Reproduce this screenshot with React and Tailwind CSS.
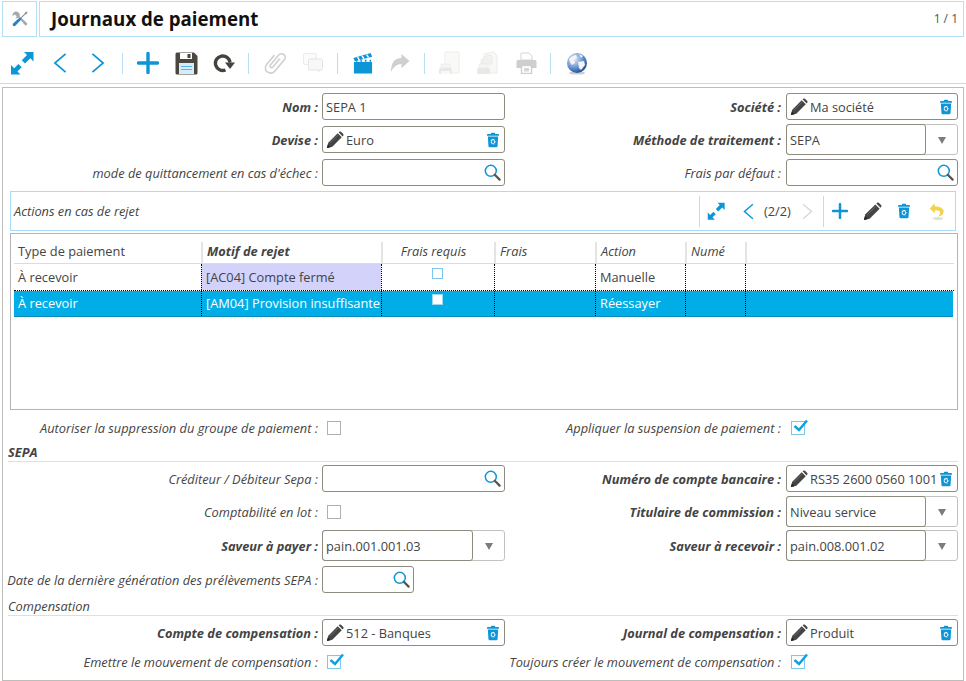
const Pencil = ({ s = 18, c = "#444" }) => (
  <svg width={s} height={s} viewBox="0 0 20 20" className="shrink-0">
    <path d="M1 19 L2.5 13 L13 2.5 L17.5 7 L7 17.5 Z" fill={c} />
    <path d="M14 1.5 L15.3 0.6 Q16 0.3 16.6 0.8 L19.2 3.4 Q19.7 4 19.3 4.7 L18.5 6 Z" fill={c} />
    <path d="M1 19 L2 15 L5 18 Z" fill="#222" />
    <path d="M4.5 13.5 L13.5 4.5" stroke="#777" strokeWidth="0.8" />
  </svg>
);
const Trash = () => (
  <svg width="12" height="16" viewBox="0 0 14 18" className="shrink-0">
    <path d="M4.5 1.5 Q4.5 0.5 5.5 0.5 H8.5 Q9.5 0.5 9.5 1.5 V2 H13 Q14 2 14 3 V4 H0 V3 Q0 2 1 2 H4.5 Z" fill="#0e95d6" />
    <path d="M1 5 H13 L12.3 16 Q12.2 17.5 10.8 17.5 H3.2 Q1.8 17.5 1.7 16 Z" fill="#0e95d6" />
    <path d="M7 8 L9.4 10 L8.4 13.4 L5.6 13.4 L4.6 10 Z" fill="none" stroke="#fff" strokeWidth="1.4" strokeDasharray="2.4 0.9" />
  </svg>
);
const Magnifier = () => (
  <svg width="17" height="17" viewBox="0 0 17 17" className="shrink-0">
    <circle cx="6.8" cy="6.8" r="5.5" fill="#fff" stroke="#0e95d6" strokeWidth="1.5" />
    <path d="M10.8 10.8 L15.6 15.6" stroke="#55554e" strokeWidth="2.2" strokeLinecap="round" />
  </svg>
);
const Expand = ({ s = 24 }) => (
  <svg width={s} height={s} viewBox="0 0 24 24" className="block">
    <path d="M14 1 H23.5 V10.5 L20.3 7.3 L15 12.5 L11.8 9.3 L17 4 Z" fill="#0e95d6" />
    <path d="M10.5 23.5 H1 V14 L4.2 17.2 L8.5 13 L11.7 16.2 L7.4 20.4 Z" fill="#0e95d6" />
  </svg>
);
const Chev = ({ dir = "l", c = "#0e95d6", w = 14, h = 22, sw = 1.8 }) => (
  <svg width={w} height={h} viewBox="0 0 15 22" fill="none" className="block">
    <path d={dir === "l" ? "M13.5 1.2 L2 11 L13.5 20.8" : "M1.5 1.2 L13 11 L1.5 20.8"} stroke={c} strokeWidth={sw} />
  </svg>
);
const Plus = ({ s = 22 }) => (
  <svg width={s} height={s} viewBox="0 0 22 22" className="block"><path d="M11 1.5 V20.5 M1.5 11 H20.5" stroke="#0e95d6" strokeWidth="3.4" strokeLinecap="round" /></svg>
);
const Save = () => (
  <svg width="23" height="23" viewBox="0 0 23 23" className="block">
    <path d="M0.5 2 Q0.5 0.5 2 0.5 H19 L22.5 4 V21 Q22.5 22.5 21 22.5 H2 Q0.5 22.5 0.5 21 Z" fill="#4a4740" />
    <rect x="5" y="1" width="12" height="6" fill="#fff" />
    <rect x="12.5" y="2" width="3" height="4" fill="#4a4740" />
    <rect x="4" y="11" width="15" height="11" fill="#d6ecfa" />
    <path d="M6 14.5 H17 M6 17.5 H17" stroke="#5cb3e6" strokeWidth="1" />
  </svg>
);
const Refresh = () => (
  <svg width="22" height="19" viewBox="0 0 22 19" fill="none" className="block">
    <path d="M17 8.5 A7.3 7.3 0 1 0 12.5 16" stroke="#45433d" strokeWidth="3.4" />
    <path d="M12 8.5 H22 L17 15 Z" fill="#45433d" />
  </svg>
);
const Clip = () => (
  <svg width="24" height="26" viewBox="0 -1 24 26" fill="none" className="block">
    <g transform="rotate(40 12 12)">
      <path d="M6.5 7 V18.5 a5.3 5.3 0 0 0 10.6 0 V3.5 a3.7 3.7 0 0 0 -7.4 0 V16.5 a1.6 1.6 0 0 0 3.2 0 V6" stroke="#d0d0ce" strokeWidth="1.6" strokeLinecap="round" />
    </g>
  </svg>
);
const Comments = () => (
  <svg width="20" height="20" viewBox="0 0 20 20" className="block">
    <rect x="0.5" y="0.5" width="13" height="11" rx="1.5" fill="#fbfbfb" stroke="#ececea" />
    <rect x="5.5" y="6" width="14" height="11" rx="1.5" fill="#f8f8f7" stroke="#e4e4e2" />
    <path d="M14 17 L16 19.5 L17 17 Z" fill="#e8e8e6" />
  </svg>
);
const Clapper = () => (
  <svg width="20" height="23" viewBox="0 0 22 24" className="block">
    <rect x="1" y="10" width="20" height="13" fill="#0e95d6" />
    <rect x="1" y="8" width="20" height="2" fill="#fff" />
    <path d="M0.5 6 L19.5 0.5 L21 4.5 L2 9.5 Z" fill="#0e95d6" />
    <path d="M5 5 L7 8 M10 3.5 L12 6.8 M15 2.2 L17 5.4" stroke="#fff" strokeWidth="1.6" />
    <path d="M4 8 V10 M9 8 V10 M14 8 V10 M19 8 V10" stroke="#0e95d6" strokeWidth="1.6" />
  </svg>
);
const Forward = () => (
  <svg width="20" height="20" viewBox="0 0 21 20" className="block">
    <path d="M12 0.5 L20.5 8 L12 15.5 V11 Q5 11 1 19.5 Q1 5 12 4.8 Z" fill="#cfcfcd" />
  </svg>
);
const DocPrint = () => (
  <svg width="22" height="25" viewBox="0 0 22 25" className="block">
    <path d="M7 1 H21 V22 H7 Z" fill="#f9f9f8" stroke="#ededeb" />
    <rect x="1" y="17" width="13" height="6" rx="1.5" fill="#e8e8e6" />
    <rect x="3" y="13" width="9" height="4" fill="#f5f5f3" stroke="#e8e8e6" strokeWidth="0.6" />
    <rect x="3" y="20" width="9" height="3" fill="#f8f8f7" />
  </svg>
);
const DocPrint2 = () => (
  <svg width="22" height="25" viewBox="0 0 22 25" className="block">
    <path d="M8 3 L18 0.8 L21 5 V22 H8 Z" fill="#f8f8f7" stroke="#ececea" />
    <path d="M5 9 Q12 2 16 5 V13 H5 Z" fill="#f1f1ef" stroke="#e6e6e4" strokeWidth="0.6" />
    <rect x="1" y="17" width="13" height="6" rx="1.5" fill="#e8e8e6" />
    <rect x="3" y="13" width="9" height="4" fill="#f5f5f3" stroke="#e8e8e6" strokeWidth="0.6" />
  </svg>
);
const Printer = () => (
  <svg width="21" height="22" viewBox="0 0 21 22" className="block">
    <path d="M5 1 H13 L16 4 V8 H5 Z" fill="#fff" stroke="#d5d5d5" />
    <path d="M2 8 H19 Q20.5 8 20.5 9.5 V16 H16 V14 H5 V16 H0.5 V9.5 Q0.5 8 2 8 Z" fill="#ccced0" />
    <rect x="5.5" y="13.5" width="10" height="8" fill="#fff" stroke="#ccced0" strokeWidth="1.4" />
    <rect x="8" y="16" width="5" height="3.5" fill="#d4d6d8" />
  </svg>
);
const Globe = () => (
  <svg width="22" height="23" viewBox="0 0 22 23" className="block">
    <defs>
      <radialGradient id="g1" cx="35%" cy="30%" r="75%">
        <stop offset="0%" stopColor="#e8f0fa" />
        <stop offset="55%" stopColor="#6f9ad6" />
        <stop offset="100%" stopColor="#1e4a94" />
      </radialGradient>
    </defs>
    <ellipse cx="11" cy="21" rx="8" ry="1.6" fill="#ccc" />
    <circle cx="11" cy="11" r="10" fill="url(#g1)" />
    <path d="M3 7 Q7 3 10 3 L11 6 L8 8 L9 11 L6 13 L4 10 Z M12 10 L18 9 L19 13 L15 18 L13 16 Z M13 2 L17 4 L15 6 Z" fill="#f4f4f2" />
  </svg>
);
const Tools = () => (
  <svg width="16" height="16" viewBox="0 0 16 16" className="block">
    <path d="M4.2 0.6 A3.6 3.6 0 0 0 0.6 5 L2.8 3.4 L4.8 5.2 L3.4 7.2 A3.6 3.6 0 0 0 6.4 6.6 L12.4 13.6 Q13.6 15 14.8 14 Q15.8 12.8 14.4 11.6 L7.6 5.2 A3.6 3.6 0 0 0 4.2 0.6 Z" fill="#a5a8ac" />
    <path d="M14.8 0.6 L15.6 1.4 L14.4 3.2 L13.2 3.6 L8.8 8 L8 7.2 L12.6 2.6 L13 1.6 Z" fill="#8d9197" />
    <path d="M8.6 7 L9.2 7.6 L8.8 9 L3.6 14.6 Q2.2 15.8 1 14.8 Q0 13.6 1.4 12.2 L6.8 7.2 Z" fill="#2f7fc0" />
  </svg>
);
const Undo = () => (
  <svg width="16" height="19" viewBox="0 0 18 20" className="block">
    <ellipse cx="10" cy="18" rx="6" ry="1.5" fill="#dddddb" />
    <path d="M6.5 0.8 L0.8 6.5 L6.5 12 V8.8 Q11.5 8.2 12.5 10.5 Q12.8 14 9.5 16 Q16.5 15 16.5 9.5 Q16 4.5 6.5 4 Z" fill="#f2d24e" />
  </svg>
);
const Sep = ({ h = "h-[21px]" }) => <div className={`w-px ${h} bg-[#b5e0f5]`} />;

const Label = ({ children, bold, w = "w-[315px]" }) => (
  <div className={`${w} shrink-0 text-right italic text-[#444] whitespace-nowrap ${bold ? "font-bold" : ""}`}>{children}</div>
);
const Box = ({ w = "w-[183px]", children }) => (
  <div className={`${w} h-[27px] shrink-0 flex items-center border border-[#8e8b80] rounded-[3px] bg-white overflow-hidden`}>{children}</div>
);
const Text = ({ v }) => <Box><span className="pl-[3px] text-[#444]">{v}</span></Box>;
const Link = ({ v, w }) => (
  <Box w={w}>
    <span className="pl-[3px] flex items-center shrink-0"><Pencil /></span>
    <span className="pl-[2px] flex-1 min-w-0 overflow-hidden whitespace-nowrap text-[#444]">{v}</span>
    <span className="pl-[2px] pr-[5px] bg-white flex items-center"><Trash /></span>
  </Box>
);
const Search = ({ w }) => (
  <Box w={w}>
    <span className="flex-1" />
    <span className="pr-[3px] flex items-center"><Magnifier /></span>
  </Box>
);
const Select = ({ v, w = "w-[183px]" }) => (
  <div className={`${w} h-[31px] shrink-0 flex border border-[#c2c2bf] rounded-[3px] bg-white`}>
    <div className="flex-1 flex items-center pl-[3px] -my-px -ml-px border border-[#8e8b80] rounded-[3px] text-[#444]">{v}</div>
    <div className="w-[31px] flex items-start justify-center pt-[12px]">
      <div className="w-0 h-0 border-l-[4px] border-r-[4px] border-t-[7px] border-l-transparent border-r-transparent border-t-[#7c7c78]" />
    </div>
  </div>
);
const Check = ({ on }) => (
  <div className={`w-[14px] h-[14px] border bg-white relative ${on ? "border-[#7cc7ee]" : "border-[#b0b0ac]"}`}>
    {on && (
      <svg width="17" height="15" viewBox="0 0 17 15" className="absolute left-[0px] top-[-3px]">
        <path d="M2.5 7 L7 11 L15 1.5" fill="none" stroke="#0ea0e0" strokeWidth="2.4" />
      </svg>
    )}
  </div>
);
const Row = ({ h, left, lb, lw, right, rb, rv }) => (
  <div className={`flex items-center ${h}`}>
    <Label bold={lb}>{left}</Label>
    <div className="ml-[4px] w-[183px] shrink-0">{lw}</div>
    {right ? <Label bold={rb} w="w-[276px]">{right}</Label> : null}
    {right ? <div className="ml-[5px] w-[172px] shrink-0">{rv}</div> : null}
  </div>
);
const CheckCell = ({ on }) => <div className="pl-[5px]"><Check on={on} /></div>;

const Cell = ({ w, first, children, className = "" }) => (
  <div className={`${w} h-full shrink-0 flex items-center pl-[4px] overflow-hidden whitespace-nowrap ${first ? "" : "border-l border-dotted border-black"} ${className}`}>{children}</div>
);
const Head = ({ w, first, children, className = "" }) => (
  <div className={`${w} h-[21px] flex items-center shrink-0 overflow-hidden whitespace-nowrap pl-[4px] pb-[3px] ${first ? "" : "italic border-l-2 border-[#e4e4e2]"} ${className}`}>{children}</div>
);

export default function App() {
  return (
    <div className="w-[966px] h-[681px] bg-white overflow-hidden text-[12.8px] text-[#444] font-['Open_Sans','Noto_Sans',sans-serif] leading-[18px]">
      <div className="flex h-[36px] mt-px mx-[2px] gap-[2px]">
        <div className="w-[35px] border border-[#b3e1f8] flex items-center justify-center"><Tools /></div>
        <div className="flex-1 border border-[#b3e1f8] flex items-center justify-between pl-[11px] pr-[5px]">
          <span className="font-bold text-[18.7px] text-[#111] leading-[26px]">Journaux de paiement</span>
          <span className="text-[12px] text-[#555]">1 / 1</span>
        </div>
      </div>
      <div className="h-[46px] mt-px flex items-center pl-[10px] pt-[5px] border-b border-[#b5e0ee]">
        <Expand />
        <div className="ml-[19px]"><Chev dir="l" /></div>
        <div className="ml-[24px]"><Chev dir="r" /></div>
        <div className="ml-[17px]"><Sep /></div>
        <div className="ml-[14px]"><Plus /></div>
        <div className="ml-[16px]"><Save /></div>
        <div className="ml-[15px]"><Refresh /></div>
        <div className="ml-[13px]"><Sep /></div>
        <div className="ml-[14px]"><Clip /></div>
        <div className="ml-[16px]"><Comments /></div>
        <div className="ml-[14px]"><Sep /></div>
        <div className="ml-[15px]"><Clapper /></div>
        <div className="ml-[17px]"><Forward /></div>
        <div className="ml-[14px]"><Sep /></div>
        <div className="ml-[13px]"><DocPrint /></div>
        <div className="ml-[16px]"><DocPrint2 /></div>
        <div className="ml-[18px]"><Printer /></div>
        <div className="ml-[13px]"><Sep /></div>
        <div className="ml-[15px]"><Globe /></div>
      </div>
      <div className="mt-[3px] mx-[2px] h-[594px] border border-[#bdbdbb]">
        <div className="pt-[2px]">
          <Row h="h-[33px]" left="Nom :" lb lw={<Text v="SEPA 1" />} right="Société :" rb rv={<Link v="Ma société" w="w-[172px]" />} />
          <Row h="h-[33px]" left="Devise :" lb lw={<Link v="Euro" />} right="Méthode de traitement :" rb rv={<Select v="SEPA" w="w-[172px]" />} />
          <Row h="h-[33px]" left="mode de quittancement en cas d'échec :" lw={<Search />} right="Frais par défaut :" rv={<Search w="w-[172px]" />} />
        </div>
        <div className="mx-[7px] mt-[2px] w-[946px] h-[40px] border border-[#a9dcf6] flex items-center pl-[3px]">
          <span className="italic flex-1">Actions en cas de rejet</span>
          <Sep h="h-[31px]" />
          <div className="ml-[7px]"><Expand s={18} /></div>
          <div className="ml-[18px]"><Chev dir="l" w={11} h={17} sw={2} /></div>
          <span className="ml-[10px] w-[27px] whitespace-nowrap">(2/2)</span>
          <div className="ml-[11px]"><Chev dir="r" c="#d8d8d6" w={11} h={17} sw={2} /></div>
          <div className="ml-[10px]"><Sep h="h-[31px]" /></div>
          <div className="ml-[8px]"><Plus s={16} /></div>
          <div className="ml-[15px]"><Pencil s={19} /></div>
          <div className="ml-[16px]"><Trash /></div>
          <div className="ml-[19px] mr-[10px]"><Undo /></div>
        </div>
        <div className="mx-[7px] mt-[2px] w-[948px] h-[177px] border border-[#b4b4b2] pl-[3px] pr-[3px] pt-[1px]">
          <div className="flex h-[29px] border-b border-[#dcdcda] items-end">
            <Head first w="w-[187px]">Type de paiement</Head>
            <Head w="w-[180px]" className="font-bold">Motif de rejet</Head>
            <Head w="w-[113px]"><span className="w-full text-center pr-[14px]">Frais requis</span></Head>
            <Head w="w-[101px]">Frais</Head>
            <Head w="w-[90px]">Action</Head>
            <Head w="w-[60px]"><span className="w-[34px] overflow-hidden">Numé.</span></Head>
            <div className="h-[21px] flex-1 border-l-2 border-[#e4e4e2]" />
          </div>
          <div className="flex h-[27px] border-b border-dotted border-black">
            <Cell first w="w-[187px]">À recevoir</Cell>
            <Cell w="w-[180px]" className="bg-[#d2d2fb]">[AC04] Compte fermé</Cell>
            <Cell w="w-[113px]" className="!items-start justify-center !pl-0 !pr-[2px] pt-[4px]"><div className="w-[11px] h-[11px] border border-[#7cc7ee] bg-white" /></Cell>
            <Cell w="w-[101px]" />
            <Cell w="w-[90px]">Manuelle</Cell>
            <Cell w="w-[60px]" />
            <div className="flex-1 border-l border-dotted border-black" />
          </div>
          <div className="flex h-[26px] mr-px bg-[#00ade6] text-white border-b border-[#0a8dbd]">
            <Cell first w="w-[187px]" className="pb-[1px]">À recevoir</Cell>
            <Cell w="w-[180px]" className="pb-[1px]">[AM04] Provision insuffisante</Cell>
            <Cell w="w-[113px]" className="!items-start justify-center !pl-0 !pr-[2px] pt-[3px]"><div className="w-[11px] h-[11px] border border-[#9bd8f4] bg-white" /></Cell>
            <Cell w="w-[101px]" />
            <Cell w="w-[90px]" className="pb-[1px]">Réessayer</Cell>
            <Cell w="w-[60px]" />
            <div className="flex-1 border-l border-dotted border-black" />
          </div>
        </div>
        <div className="h-[35px] flex items-center">
          <Label>Autoriser la suppression du groupe de paiement :</Label>
          <div className="ml-[4px] w-[183px] shrink-0"><CheckCell /></div>
          <Label w="w-[276px]">Appliquer la suspension de paiement :</Label>
          <div className="ml-[5px]"><CheckCell on /></div>
        </div>
        <div className="mx-[5px] h-[17px] border-b border-[#cfe4ef] italic font-bold leading-[14px]">SEPA</div>
        <div>
          <Row h="h-[33px]" left="Créditeur / Débiteur Sepa :" lw={<Search />} right="Numéro de compte bancaire :" rb rv={<Link v="RS35 2600 0560 1001 6113 79" w="w-[172px]" />} />
          <Row h="h-[33px]" left="Comptabilité en lot :" lw={<CheckCell />} right="Titulaire de commission :" rb rv={<Select v="Niveau service" w="w-[172px]" />} />
          <Row h="h-[35px]" left="Saveur à payer :" lb lw={<Select v="pain.001.001.03" />} right="Saveur à recevoir :" rb rv={<Select v="pain.008.001.02" w="w-[172px]" />} />
          <Row h="h-[33px]" left="Date de la dernière génération des prélèvements SEPA :" lw={<Search w="w-[92px]" />} />
        </div>
        <div className="mx-[5px] h-[20px] border-b border-[#cfe4ef] flex items-end italic">Compensation</div>
        <div>
          <Row h="h-[33px]" left="Compte de compensation :" lb lw={<Link v="512 - Banques" />} right="Journal de compensation :" rb rv={<Link v="Produit" w="w-[172px]" />} />
          <Row h="h-[25px]" left="Emettre le mouvement de compensation :" lw={<CheckCell on />} right="Toujours créer le mouvement de compensation :" rv={<CheckCell on />} />
        </div>
      </div>
    </div>
  );
}
